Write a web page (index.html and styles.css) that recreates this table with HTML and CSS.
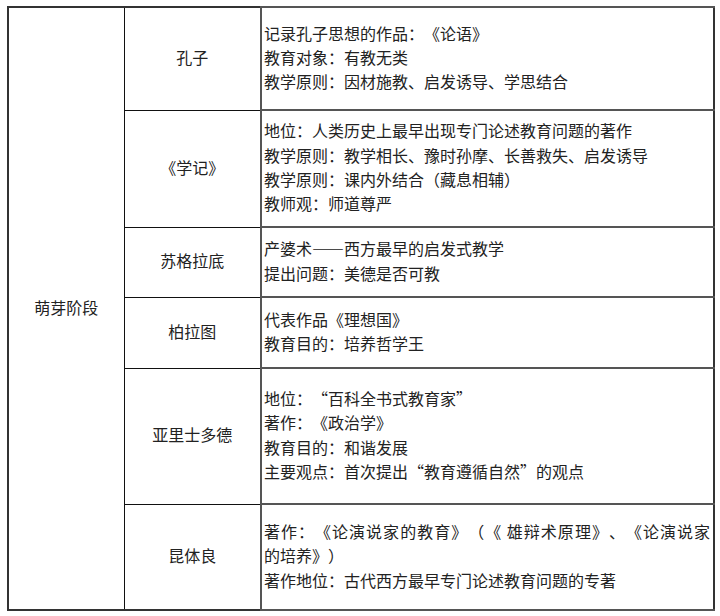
FILE: index.html
```html
<!DOCTYPE html>
<html lang="zh-CN">
<head>
<meta charset="utf-8">
<link rel="stylesheet" href="styles.css">
</head>
<body>
<table class="sheet">
  <colgroup>
    <col class="c-stage">
    <col class="c-name">
    <col class="c-desc">
  </colgroup>
  <tr class="r1">
    <td class="stage" rowspan="6">萌芽阶段</td>
    <td class="name">孔子</td>
    <td class="desc">记录孔子思想的作品：《论语》<br>教育对象：有教无类<br>教学原则：因材施教、启发诱导、学思结合</td>
  </tr>
  <tr class="r2">
    <td class="name">《学记》</td>
    <td class="desc">地位：人类历史上最早出现专门论述教育问题的著作<br>教学原则：教学相长、豫时孙摩、长善救失、启发诱导<br>教学原则：课内外结合（藏息相辅）<br>教师观：师道尊严</td>
  </tr>
  <tr class="r3">
    <td class="name">苏格拉底</td>
    <td class="desc">产婆术——西方最早的启发式教学<br>提出问题：美德是否可教</td>
  </tr>
  <tr class="r4">
    <td class="name">柏拉图</td>
    <td class="desc">代表作品《理想国》<br>教育目的：培养哲学王</td>
  </tr>
  <tr class="r5">
    <td class="name">亚里士多德</td>
    <td class="desc">地位：“百科全书式教育家”<br>著作：《政治学》<br>教育目的：和谐发展<br>主要观点：首次提出“教育遵循自然”的观点</td>
  </tr>
  <tr class="r6">
    <td class="name">昆体良</td>
    <td class="desc"><span class="just">著作：《论演说家的教育》（《 雄辩术原理》、《论演说家</span>的培养》）<br>著作地位：古代西方最早专门论述教育问题的专著</td>
  </tr>
</table>
</body>
</html>
```

FILE: styles.css
```css
html, body {
  margin: 0;
  padding: 0;
  background: #ffffff;
}

body {
  padding: 6px 0 0 7px;
  font-family: "Noto Sans CJK SC", "Liberation Serif", serif;
  font-size: 16px;
  color: #222222;
  text-spacing-trim: space-all;
}

.sheet {
  border-collapse: collapse;
  table-layout: fixed;
  width: 706px;
  border: 2px solid #333333;
}

.c-stage { width: 116px; }
.c-name { width: 137px; }
.c-desc { width: 453px; }

.sheet td {
  border: 1px solid #111111;
  padding: 0 0 3px 0;
  line-height: 24.3px;
  vertical-align: middle;
}

.stage,
.name {
  text-align: center;
}

.sheet td.desc {
  border-left: 2px solid #555555;
  border-top: 2px solid #555555;
  border-bottom: 2px solid #555555;
  padding: 0 3px 3px 2px;
  text-align: left;
}

.just {
  display: block;
  text-align: justify;
  text-align-last: justify;
}

.r1 { height: 103px; }
.r2 { height: 117px; }
.r3 { height: 70px; }
.r4 { height: 71px; }
.r5 { height: 136px; }
.r6 { height: 106px; }
```
